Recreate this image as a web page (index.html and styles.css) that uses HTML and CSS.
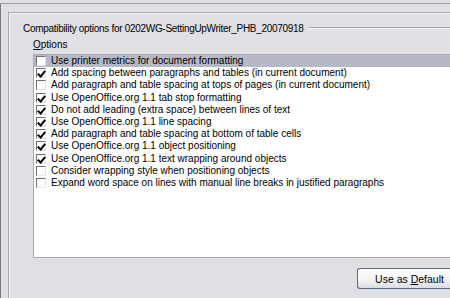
FILE: index.html
```html
<!DOCTYPE html>
<html lang="en">
<head>
    <meta charset="UTF-8">
    <title>Compatibility</title>
    <link rel="stylesheet" href="styles.css">
</head>
<body>
    <div class="tab_page">
        <div class="inner_page">
            <div class="title_row">
                <span>Compatibility options for 0202WG-SettingUpWriter_PHB_20070918</span>
                <div class="fixed_line"></div>
            </div>
            <div class="options_label"><u>O</u>ptions</div>
            <ul class="option_list">
                <li class="selected"><span class="check"></span>Use printer metrics for document formatting</li>
                <li><span class="check on"></span>Add spacing between paragraphs and tables (in current document)</li>
                <li><span class="check"></span>Add paragraph and table spacing at tops of pages (in current document)</li>
                <li><span class="check on"></span>Use OpenOffice.org 1.1 tab stop formatting</li>
                <li><span class="check on"></span>Do not add leading (extra space) between lines of text</li>
                <li><span class="check on"></span>Use OpenOffice.org 1.1 line spacing</li>
                <li><span class="check on"></span>Add paragraph and table spacing at bottom of table cells</li>
                <li><span class="check on"></span>Use OpenOffice.org 1.1 object positioning</li>
                <li><span class="check on"></span>Use OpenOffice.org 1.1 text wrapping around objects</li>
                <li><span class="check"></span>Consider wrapping style when positioning objects</li>
                <li><span class="check"></span>Expand word space on lines with manual line breaks in justified paragraphs</li>
            </ul>
            <div class="button_row">
                <button class="default_btn">Use as <u>D</u>efault</button>
            </div>
        </div>
    </div>
</body>
</html>
```

FILE: styles.css
```css
*{
    margin:0;
    padding:0;
    box-sizing:border-box;
}
body{
    width:450px;
    height:298px;
    overflow:hidden;
    background-color:#e0dfe3;
    font-family:"Liberation Sans", Arial, sans-serif;
    font-size:10px;
    color:#000;
}
.tab_page{
    margin-top:3px;
    height:295px;
    border-left:1px solid #7a7a86;
    border-top:1px solid #9c9ca8;
    padding:8px 0 0 7px;
}
.inner_page{
    height:286px;
    border-left:1px solid #a8a8b0;
    border-top:1px solid #a8a8b0;
    box-shadow:inset 1px 1px 0 #f4f4f6;
    padding:8px 0 0 14px;
}
.title_row{
    display:flex;
    align-items:center;
    height:14px;
}
.title_row span{
    white-space:nowrap;
    letter-spacing:-0.3px;
}
.fixed_line{
    flex:1;
    margin-left:5px;
    border-top:1px solid #a0a0aa;
    border-bottom:1px solid #fafafa;
}
.options_label{
    margin:3px 0 0 10px;
    height:14px;
    line-height:14px;
}
.option_list{
    list-style-type:none;
    margin:2px 0 0 10px;
    height:204px;
    background-color:#fff;
    border:1px solid #a3abbb;
    border-right:none;
    overflow:hidden;
}
.option_list li{
    height:12.2px;
    line-height:12.2px;
    display:flex;
    align-items:center;
    white-space:nowrap;
}
.option_list li.selected{
    background-color:#b6b9c4;
}
.check{
    flex:none;
    width:10px;
    height:10px;
    margin:0 5px 0 2px;
    background-color:#fff;
    border-top:1px solid #707070;
    border-left:1px solid #707070;
    border-right:1px solid #e4e4e4;
    border-bottom:1px solid #e4e4e4;
    position:relative;
}
.check.on::after{
    content:"";
    position:absolute;
    left:2px;
    top:0px;
    width:3px;
    height:6px;
    border-right:2px solid #000;
    border-bottom:2px solid #000;
    transform:rotate(40deg);
}
.button_row{
    margin:10px 0 0 334px;
}
.default_btn{
    width:93px;
    height:21px;
    font-family:"Liberation Sans", Arial, sans-serif;
    font-size:10.5px;
    color:#000;
    border:1px solid #5a6a86;
    border-right:none;
    border-radius:3px 0 0 3px;
    background:linear-gradient(#ffffff, #f2f2f4 60%, #dcdce4);
    padding-left:11px;
}
```
